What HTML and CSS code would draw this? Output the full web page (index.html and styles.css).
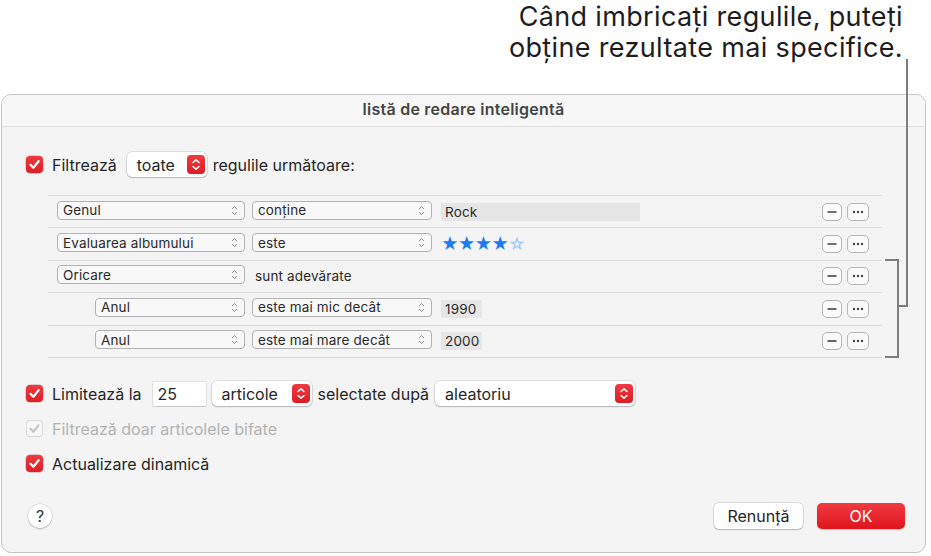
FILE: index.html
```html
<!DOCTYPE html>
<html lang="ro">
<head>
<meta charset="utf-8">
<title>listă de redare inteligentă</title>
<link rel="stylesheet" href="styles.css">
</head>
<body>
<div class="callout">Când imbricați regulile, puteți<br>obține rezultate mai specifice.</div>

<div class="window">
  <div class="titlebar">listă de redare inteligentă</div>
  <div class="content">
    <div class="line filter">
      <span class="cb"><svg viewBox="0 0 17 17" width="17" height="17"><path d="M4.5 8.8 L7.4 11.8 L12.6 5.2" fill="none" stroke="#fff" stroke-width="2.2" stroke-linecap="round" stroke-linejoin="round"/></svg></span>
      <span class="lbl l-filter">Filtrează</span>
      <div class="pop pop-toate"><span class="pop-text">toate</span><span class="step"><svg viewBox="0 0 18 19" width="18" height="19"><path d="M6 7.5 L9 4.8 L12 7.5 M6 11.5 L9 14.2 L12 11.5" fill="none" stroke="#fff" stroke-width="1.6" stroke-linecap="round" stroke-linejoin="round"/></svg></span></div>
      <span class="lbl l-rules">regulile următoare:</span>
    </div>

    <div class="rules">
      <div class="rule">
        <div class="sel w1"><span>Genul</span><svg class="chev" viewBox="0 0 7 11" width="7" height="11"><path d="M1 4 L3.5 1.5 L6 4 M1 7 L3.5 9.5 L6 7" fill="none" stroke="#8a8a8a" stroke-width="1"/></svg></div>
        <div class="sel w2"><span>conține</span><svg class="chev" viewBox="0 0 7 11" width="7" height="11"><path d="M1 4 L3.5 1.5 L6 4 M1 7 L3.5 9.5 L6 7" fill="none" stroke="#8a8a8a" stroke-width="1"/></svg></div>
        <div class="field f-wide">Rock</div>
        <div class="btns"><span class="sb"><svg viewBox="0 0 20 18" width="20" height="18"><path d="M5.5 9 H14.5" stroke="#444" stroke-width="1.6"/></svg></span><span class="sb sb2"><svg viewBox="0 0 22 18" width="22" height="18"><circle cx="7" cy="9" r="1.2" fill="#444"/><circle cx="11" cy="9" r="1.2" fill="#444"/><circle cx="15" cy="9" r="1.2" fill="#444"/></svg></span></div>
      </div>
      <div class="rule">
        <div class="sel w1"><span>Evaluarea albumului</span><svg class="chev" viewBox="0 0 7 11" width="7" height="11"><path d="M1 4 L3.5 1.5 L6 4 M1 7 L3.5 9.5 L6 7" fill="none" stroke="#8a8a8a" stroke-width="1"/></svg></div>
        <div class="sel w2"><span>este</span><svg class="chev" viewBox="0 0 7 11" width="7" height="11"><path d="M1 4 L3.5 1.5 L6 4 M1 7 L3.5 9.5 L6 7" fill="none" stroke="#8a8a8a" stroke-width="1"/></svg></div>
        <div class="stars"><span class="on">★★★★</span><span class="off">☆</span></div>
        <div class="btns"><span class="sb"><svg viewBox="0 0 20 18" width="20" height="18"><path d="M5.5 9 H14.5" stroke="#444" stroke-width="1.6"/></svg></span><span class="sb sb2"><svg viewBox="0 0 22 18" width="22" height="18"><circle cx="7" cy="9" r="1.2" fill="#444"/><circle cx="11" cy="9" r="1.2" fill="#444"/><circle cx="15" cy="9" r="1.2" fill="#444"/></svg></span></div>
      </div>
      <div class="rule">
        <div class="sel w1"><span>Oricare</span><svg class="chev" viewBox="0 0 7 11" width="7" height="11"><path d="M1 4 L3.5 1.5 L6 4 M1 7 L3.5 9.5 L6 7" fill="none" stroke="#8a8a8a" stroke-width="1"/></svg></div>
        <div class="plain">sunt adevărate</div>
        <div class="btns"><span class="sb"><svg viewBox="0 0 20 18" width="20" height="18"><path d="M5.5 9 H14.5" stroke="#444" stroke-width="1.6"/></svg></span><span class="sb sb2"><svg viewBox="0 0 22 18" width="22" height="18"><circle cx="7" cy="9" r="1.2" fill="#444"/><circle cx="11" cy="9" r="1.2" fill="#444"/><circle cx="15" cy="9" r="1.2" fill="#444"/></svg></span></div>
      </div>
      <div class="rule nested">
        <div class="sel w1n"><span>Anul</span><svg class="chev" viewBox="0 0 7 11" width="7" height="11"><path d="M1 4 L3.5 1.5 L6 4 M1 7 L3.5 9.5 L6 7" fill="none" stroke="#8a8a8a" stroke-width="1"/></svg></div>
        <div class="sel w2"><span>este mai mic decât</span><svg class="chev" viewBox="0 0 7 11" width="7" height="11"><path d="M1 4 L3.5 1.5 L6 4 M1 7 L3.5 9.5 L6 7" fill="none" stroke="#8a8a8a" stroke-width="1"/></svg></div>
        <div class="field f-year">1990</div>
        <div class="btns"><span class="sb"><svg viewBox="0 0 20 18" width="20" height="18"><path d="M5.5 9 H14.5" stroke="#444" stroke-width="1.6"/></svg></span><span class="sb sb2"><svg viewBox="0 0 22 18" width="22" height="18"><circle cx="7" cy="9" r="1.2" fill="#444"/><circle cx="11" cy="9" r="1.2" fill="#444"/><circle cx="15" cy="9" r="1.2" fill="#444"/></svg></span></div>
      </div>
      <div class="rule nested">
        <div class="sel w1n"><span>Anul</span><svg class="chev" viewBox="0 0 7 11" width="7" height="11"><path d="M1 4 L3.5 1.5 L6 4 M1 7 L3.5 9.5 L6 7" fill="none" stroke="#8a8a8a" stroke-width="1"/></svg></div>
        <div class="sel w2"><span>este mai mare decât</span><svg class="chev" viewBox="0 0 7 11" width="7" height="11"><path d="M1 4 L3.5 1.5 L6 4 M1 7 L3.5 9.5 L6 7" fill="none" stroke="#8a8a8a" stroke-width="1"/></svg></div>
        <div class="field f-year">2000</div>
        <div class="btns"><span class="sb"><svg viewBox="0 0 20 18" width="20" height="18"><path d="M5.5 9 H14.5" stroke="#444" stroke-width="1.6"/></svg></span><span class="sb sb2"><svg viewBox="0 0 22 18" width="22" height="18"><circle cx="7" cy="9" r="1.2" fill="#444"/><circle cx="11" cy="9" r="1.2" fill="#444"/><circle cx="15" cy="9" r="1.2" fill="#444"/></svg></span></div>
      </div>
    </div>

    <div class="line limit">
      <span class="cb"><svg viewBox="0 0 17 17" width="17" height="17"><path d="M4.5 8.8 L7.4 11.8 L12.6 5.2" fill="none" stroke="#fff" stroke-width="2.2" stroke-linecap="round" stroke-linejoin="round"/></svg></span>
      <span class="lbl l-limit">Limitează la</span>
      <div class="num">25</div>
      <div class="pop pop-art"><span class="pop-text">articole</span><span class="step"><svg viewBox="0 0 18 19" width="18" height="19"><path d="M6 7.5 L9 4.8 L12 7.5 M6 11.5 L9 14.2 L12 11.5" fill="none" stroke="#fff" stroke-width="1.6" stroke-linecap="round" stroke-linejoin="round"/></svg></span></div>
      <span class="lbl l-sel">selectate după</span>
      <div class="pop pop-ale"><span class="pop-text">aleatoriu</span><span class="step"><svg viewBox="0 0 18 19" width="18" height="19"><path d="M6 7.5 L9 4.8 L12 7.5 M6 11.5 L9 14.2 L12 11.5" fill="none" stroke="#fff" stroke-width="1.6" stroke-linecap="round" stroke-linejoin="round"/></svg></span></div>
    </div>

    <div class="line opt1">
      <span class="cb cb-off"><svg viewBox="0 0 17 17" width="17" height="17"><path d="M4.5 8.8 L7.4 11.8 L12.6 5.2" fill="none" stroke="#c2c2c2" stroke-width="2" stroke-linecap="round" stroke-linejoin="round"/></svg></span>
      <span class="lbl dim">Filtrează doar articolele bifate</span>
    </div>

    <div class="line opt2">
      <span class="cb"><svg viewBox="0 0 17 17" width="17" height="17"><path d="M4.5 8.8 L7.4 11.8 L12.6 5.2" fill="none" stroke="#fff" stroke-width="2.2" stroke-linecap="round" stroke-linejoin="round"/></svg></span>
      <span class="lbl">Actualizare dinamică</span>
    </div>

    <div class="footer">
      <span class="help">?</span>
      <span class="btn cancel">Renunță</span>
      <span class="btn ok">OK</span>
    </div>
  </div>
</div>

<div class="lead"></div>
<div class="lead-h"></div>
<div class="bracket"></div>
</body>
</html>
```

FILE: styles.css
```css
* { box-sizing: border-box; }
html, body { margin: 0; padding: 0; }
body {
  width: 931px;
  height: 556px;
  overflow: hidden;
  position: relative;
  background: #ffffff;
  font-family: Inter, "Noto Sans", "Liberation Sans", sans-serif;
  color: #262626;
}

.callout {
  height: 63px;
  padding: 1px 28px 0 0;
  text-align: right;
  font-size: 27px;
  letter-spacing: 0.35px;
  line-height: 31px;
  color: #1d1d1f;
}

.window {
  margin: 31px 5px 0 1px;
  height: 459px;
  border: 1px solid #c4c4c4;
  border-radius: 10px;
  background: #f4f4f4;
  overflow: hidden;
}

.titlebar {
  height: 32px;
  border-bottom: 1px solid #dedede;
  background: #f7f7f7;
  text-align: center;
  font-size: 16px;
  font-weight: 600;
  letter-spacing: 0.25px;
  line-height: 29px;
  color: #444;
}

.content {
  padding: 0 20px 0 24px;
}

.line {
  display: flex;
  align-items: center;
  font-size: 16px;
}

.filter { margin-top: 25px; height: 25px; }
.limit { margin-top: 24px; height: 24px; }
.opt1 { margin-top: 13px; height: 20px; }
.opt2 { margin-top: 15px; height: 20px; }

.cb {
  width: 17px;
  height: 17px;
  border-radius: 4px;
  background: linear-gradient(#ec3a40, #dc1f27);
  box-shadow: 0 0 0 0.5px rgba(150, 0, 0, 0.35);
  display: flex;
  flex: none;
}
.cb-off {
  background: #f7f7f7;
  box-shadow: inset 0 0 0 1px #dadada;
}

.lbl { margin-left: 9px; white-space: nowrap; }
.dim { color: #b3b3b3; }
.l-filter { margin-right: 10px; }
.l-rules { margin-left: 6px; }
.l-limit { margin-right: 11px; }
.l-sel { margin-left: 6px; margin-right: 6px; }

.pop {
  height: 25px;
  background: #ffffff;
  border-radius: 5px;
  box-shadow: 0 0 0 0.5px rgba(0, 0, 0, 0.18), 0 1px 1.5px rgba(0, 0, 0, 0.18);
  display: flex;
  align-items: center;
  justify-content: space-between;
  padding: 0 2px 0 10px;
  font-size: 16px;
}
.pop-toate { width: 80px; }
.pop-art { width: 100px; margin-left: 6px; }
.pop-ale { width: 200px; }

.step {
  width: 18px;
  height: 19px;
  border-radius: 4px;
  background: linear-gradient(#ee3a40, #de1c24);
  display: flex;
}

.num {
  width: 53px;
  height: 24px;
  background: #ffffff;
  box-shadow: 0 0 0 0.5px rgba(0, 0, 0, 0.15), 0 0.5px 1px rgba(0, 0, 0, 0.12);
  padding-left: 5px;
  line-height: 24px;
  font-size: 16px;
}

.rules {
  margin: 18px 23px 0 22px;
  border-bottom: 1px solid #dcdcdc;
}
.rule {
  height: 32.4px;
  border-top: 1px solid #dcdcdc;
  display: flex;
  align-items: center;
  padding-left: 9px;
  padding-right: 13px;
  font-size: 13.5px;
  letter-spacing: 0.15px;
}
.rule.nested { padding-left: 47px; }

.sel {
  height: 19px;
  border: 1px solid #b3b3b3;
  border-radius: 4px;
  background: #f8f8f8;
  display: flex;
  align-items: center;
  justify-content: space-between;
  padding: 0 6px 0 5px;
  margin-top: -3px;
  white-space: nowrap;
  color: #2a2a2a;
}
.w1 { width: 188px; margin-right: 7px; }
.w1n { width: 150px; margin-right: 7px; }
.w2 { width: 180px; margin-right: 9px; }
.chev { flex: none; }

.plain { margin-left: 3px; margin-top: -1px; color: #2a2a2a; }

.field {
  height: 18px;
  background: #e6e6e6;
  padding-left: 4px;
  line-height: 19px;
  color: #2a2a2a;
}
.f-wide { width: 199px; }
.f-year { width: 41px; }

.stars {
  font-size: 17px;
  line-height: 18px;
  letter-spacing: -1px;
  margin-top: -1px;
}
.stars .on { color: #1c7cf4; }
.stars .off { color: #a8c8f4; }

.btns {
  margin-left: auto;
  display: flex;
  gap: 5px;
}
.sb {
  width: 20px;
  height: 18px;
  border: 1px solid #b5b5b5;
  border-radius: 5px;
  background: #fafafa;
  display: flex;
  align-items: center;
  justify-content: center;
}
.sb svg { flex: none; }
.sb2 { width: 22px; }

.footer {
  margin-top: 29px;
  height: 26px;
  display: flex;
  align-items: center;
}
.help {
  width: 24px;
  height: 24px;
  margin-left: 2px;
  border-radius: 50%;
  background: #ffffff;
  box-shadow: 0 0 0 0.5px rgba(0, 0, 0, 0.15), 0 1px 1.5px rgba(0, 0, 0, 0.2);
  display: flex;
  align-items: center;
  justify-content: center;
  font-size: 16px;
  color: #333;
}
.btn {
  height: 26px;
  border-radius: 5px;
  display: flex;
  align-items: center;
  justify-content: center;
  font-size: 16px;
}
.cancel {
  width: 89px;
  margin-left: auto;
  background: #ffffff;
  box-shadow: 0 0 0 0.5px rgba(0, 0, 0, 0.18), 0 1px 1.5px rgba(0, 0, 0, 0.18);
  color: #262626;
}
.ok {
  width: 88px;
  margin-left: 14px;
  background: linear-gradient(#ef3b41, #e0141c);
  color: #ffffff;
  box-shadow: 0 1px 1.5px rgba(0, 0, 0, 0.18);
}

/* callout connector lines drawn over the dialog */
.lead {
  position: absolute;
  left: 906px;
  top: 59px;
  width: 2px;
  height: 248px;
  background: #7d7d7d;
}
.lead-h {
  position: absolute;
  left: 897px;
  top: 305px;
  width: 11px;
  height: 2px;
  background: #7d7d7d;
}
.bracket {
  position: absolute;
  left: 885px;
  top: 259px;
  width: 14px;
  height: 99px;
  border: 2px solid #7d7d7d;
  border-left: none;
}
```
